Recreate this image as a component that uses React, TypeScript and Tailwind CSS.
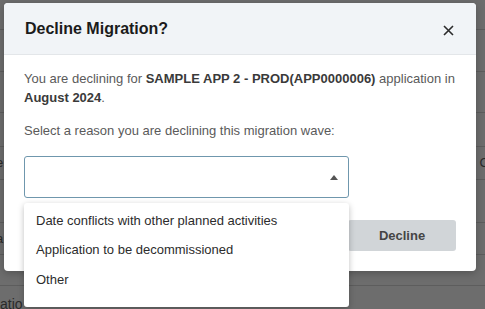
import React from "react";

const bgRows = [30, 42, 41, 34, 33, 43, 32, 31];

function Backdrop() {
  return (
    <div className="absolute inset-0 bg-[#6d6d6d] text-[13px] text-[#2a2a2a]">
      {bgRows.map((h, i) => (
        <div
          key={i}
          className="flex items-center justify-between border-b border-[#5d5d5d]"
          style={{ height: h }}
        >
          <span className="-ml-1">{i === 4 ? "e" : i === 6 ? "a" : ""}</span>
          <span className="-mr-1">{i === 4 ? "C" : ""}</span>
        </div>
      ))}
      <div className="pt-2 text-[14px]">atio</div>
    </div>
  );
}

export default function App() {
  const options = [
    "Date conflicts with other planned activities",
    "Application to be decommissioned",
    "Other",
  ];

  return (
    <div
      className="relative h-[309px] w-[485px] overflow-hidden"
      style={{ fontFamily: '"Liberation Sans", Arial, sans-serif' }}
    >
      <Backdrop />

      <div className="absolute left-[4px] top-[3px] w-[472px] rounded-[4px] bg-white shadow-[0_2px_8px_rgba(0,0,0,0.25)]">
        <div className="flex h-[52px] items-center justify-between rounded-t-[4px] border-b border-[#e3e6e9] bg-[#f1f4f7] pl-[21px] pr-[22px]">
          <h2 className="text-[16px] font-bold text-[#1b1b1b]">Decline Migration?</h2>
          <svg width="11" height="11" viewBox="0 0 11 11" className="mt-[3px]">
            <path d="M1 1 L10 10 M10 1 L1 10" stroke="#2b2b2b" strokeWidth="1.6" />
          </svg>
        </div>

        <div className="px-[20px] pt-[14px] pb-[20px] text-[13px] text-[#5a5a5a]">
          <p className="leading-[19px]">
            You are declining for{" "}
            <span className="font-bold text-[#3a3a3a]">SAMPLE APP 2 - PROD(APP0000006)</span>{" "}
            application in <span className="font-bold text-[#3a3a3a]">August 2024</span>.
          </p>

          <p className="mt-[14px] leading-[19px]">Select a reason you are declining this migration wave:</p>

          <div className="mt-[16px] flex h-[42px] w-[325px] items-center justify-end rounded-[3px] border border-[#6f97ad] pr-[10px]">
            <svg width="8" height="5" viewBox="0 0 8 5">
              <path d="M0 5 L4 0 L8 5 Z" fill="#555" />
            </svg>
          </div>

          <div className="mt-[22px] flex justify-end">
            <button className="h-[31px] w-[108px] rounded-[3px] bg-[#d1d5d8] text-[13px] font-bold text-[#454545]">
              Decline
            </button>
          </div>
        </div>
      </div>

      <div className="absolute left-[24px] top-[203px] h-[104px] w-[325px] rounded-[3px] bg-white pt-[3px] shadow-[0_2px_6px_rgba(0,0,0,0.25)]">
        <ul className="text-[13px] text-[#2c2c2c]">
          {options.map((o, i) => (
            <li
              key={o}
              className={i === 1 ? "flex h-[30px] items-center pl-[12px]" : "flex h-[29px] items-center pl-[12px]"}
            >
              {o}
            </li>
          ))}
        </ul>
      </div>
    </div>
  );
}
